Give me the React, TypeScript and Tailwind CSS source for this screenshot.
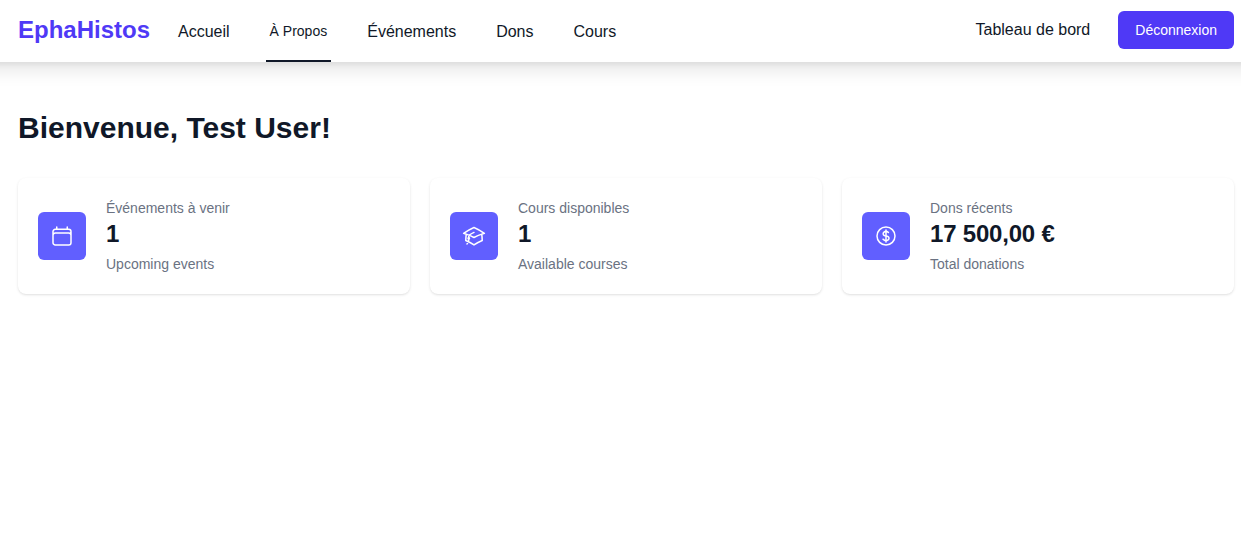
import type { IconType } from "react-icons";
import {
  HiOutlineAcademicCap,
  HiOutlineCalendar,
  HiOutlineCurrencyDollar,
} from "react-icons/hi2";
import clsx from "clsx";

type Stat = {
  title: string;
  value: string;
  caption: string;
  icon: IconType;
};

const NAV_LINKS = [
  { label: "Accueil", active: false },
  { label: "À Propos", active: true },
  { label: "Événements", active: false },
  { label: "Dons", active: false },
  { label: "Cours", active: false },
];

const STATS: Stat[] = [
  {
    title: "Événements à venir",
    value: "1",
    caption: "Upcoming events",
    icon: HiOutlineCalendar,
  },
  {
    title: "Cours disponibles",
    value: "1",
    caption: "Available courses",
    icon: HiOutlineAcademicCap,
  },
  {
    title: "Dons récents",
    value: "17\u00a0500,00\u00a0€",
    caption: "Total donations",
    icon: HiOutlineCurrencyDollar,
  },
];

function Navbar() {
  return (
    <header className="-mx-8 -mt-0.5 flex h-16 justify-between bg-white pr-[39px] pl-[50px] shadow-[0_12px_18px_-4px_rgb(0_0_0/0.1),0_4px_8px_-4px_rgb(0_0_0/0.1)]">
      <div className="flex">
        <a href="#" className="flex items-center text-2xl font-bold text-indigo-600">
          EphaHistos
        </a>
        <nav className="ml-6 flex gap-8">
          {NAV_LINKS.map((link) => (
            <a
              key={link.label}
              href="#"
              className={clsx(
                "inline-flex items-center px-1 pt-1",
                link.active && "border-b-2 border-gray-900 text-sm font-medium"
              )}
            >
              {link.label}
            </a>
          ))}
        </nav>
      </div>
      <div className="flex items-center gap-6">
        <a href="#" className="px-1">
          Tableau de bord
        </a>
        <button
          type="button"
          className="rounded-md border border-transparent bg-indigo-600 px-4 py-2 text-sm font-medium text-white"
        >
          Déconnexion
        </button>
      </div>
    </header>
  );
}

function StatCard({ title, value, caption, icon: Icon }: Stat) {
  return (
    <div className="flex items-center gap-5 rounded-lg bg-white p-5 shadow-sm">
      <div className="shrink-0 rounded-md bg-indigo-500 p-3">
        <Icon className="size-6 text-white" />
      </div>
      <div>
        <p className="text-sm font-medium text-gray-500">{title}</p>
        <p className="text-2xl font-semibold tracking-[-0.2px]">{value}</p>
        <p className="mt-1 text-sm text-gray-500">{caption}</p>
      </div>
    </div>
  );
}

export default function App() {
  return (
    <div className="flow-root min-h-screen overflow-x-clip bg-white font-['Liberation_Sans',Arial,sans-serif] text-gray-900">
      <Navbar />
      <main className="pt-12 pr-[7px] pl-[18px]">
        <h1 className="text-3xl font-bold">Bienvenue, Test User!</h1>
        <div className="mt-8 grid grid-cols-3 gap-5">
          {STATS.map((stat) => (
            <StatCard key={stat.title} {...stat} />
          ))}
        </div>
      </main>
    </div>
  );
}
